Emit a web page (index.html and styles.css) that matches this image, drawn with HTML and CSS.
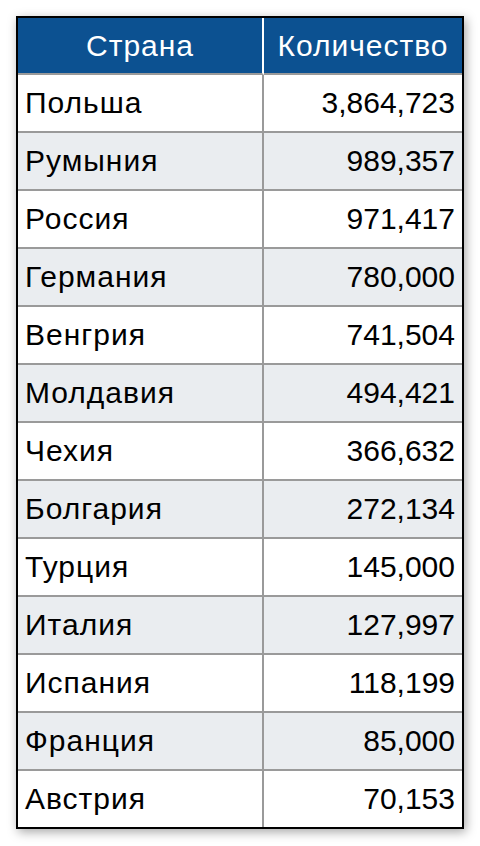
FILE: index.html
```html
<!DOCTYPE html>
<html lang="ru">
<head>
<meta charset="utf-8">
<title>Страна — Количество</title>
<link rel="stylesheet" href="styles.css">
</head>
<body>
<div class="frame">
  <table class="data">
    <thead>
      <tr><th class="c-name">Страна</th><th class="c-num">Количество</th></tr>
    </thead>
    <tbody>
      <tr><td class="c-name">Польша</td><td class="c-num">3,864,723</td></tr>
      <tr><td class="c-name">Румыния</td><td class="c-num">989,357</td></tr>
      <tr><td class="c-name">Россия</td><td class="c-num">971,417</td></tr>
      <tr><td class="c-name">Германия</td><td class="c-num">780,000</td></tr>
      <tr><td class="c-name">Венгрия</td><td class="c-num">741,504</td></tr>
      <tr><td class="c-name">Молдавия</td><td class="c-num">494,421</td></tr>
      <tr><td class="c-name">Чехия</td><td class="c-num">366,632</td></tr>
      <tr><td class="c-name">Болгария</td><td class="c-num">272,134</td></tr>
      <tr><td class="c-name">Турция</td><td class="c-num">145,000</td></tr>
      <tr><td class="c-name">Италия</td><td class="c-num">127,997</td></tr>
      <tr><td class="c-name">Испания</td><td class="c-num">118,199</td></tr>
      <tr><td class="c-name">Франция</td><td class="c-num">85,000</td></tr>
      <tr><td class="c-name">Австрия</td><td class="c-num">70,153</td></tr>
    </tbody>
  </table>
</div>
</body>
</html>
```
FILE: styles.css
```css
html, body {
  margin: 0;
  padding: 0;
  background: #ffffff;
}
body {
  padding: 16px;
  font-family: "Liberation Sans", Arial, sans-serif;
}
.frame {
  width: 448px;
  box-sizing: border-box;
  border: 2px solid #000000;
  box-shadow: 2px 3px 10px rgba(0, 0, 0, 0.35);
  background: #ffffff;
}
.data {
  width: 444px;
  border-collapse: separate;
  border-spacing: 0;
  table-layout: fixed;
  font-size: 30px;
  color: #000000;
}
.data th,
.data td {
  box-sizing: border-box;
  padding: 0 7px;
  vertical-align: middle;
  white-space: nowrap;
  letter-spacing: 1px;
}
.data .c-name {
  width: 246px;
}
.data th {
  height: 57px;
  background: #0c5191;
  color: #ffffff;
  font-weight: normal;
  text-align: center;
  border-bottom: 2px solid #9a9a9a;
}
.data th.c-name {
  border-right: 2px solid #ffffff;
}
.data td {
  height: 58px;
  border-bottom: 2px solid #9a9a9a;
}
.data td.c-name {
  text-align: left;
  border-right: 2px solid #9a9a9a;
}
.data td.c-num {
  text-align: right;
  letter-spacing: 0;
}
.data tbody tr:nth-child(even) td {
  background: #eaedf0;
}
.data tbody tr:last-child td {
  height: 56px;
  border-bottom: none;
}
```
